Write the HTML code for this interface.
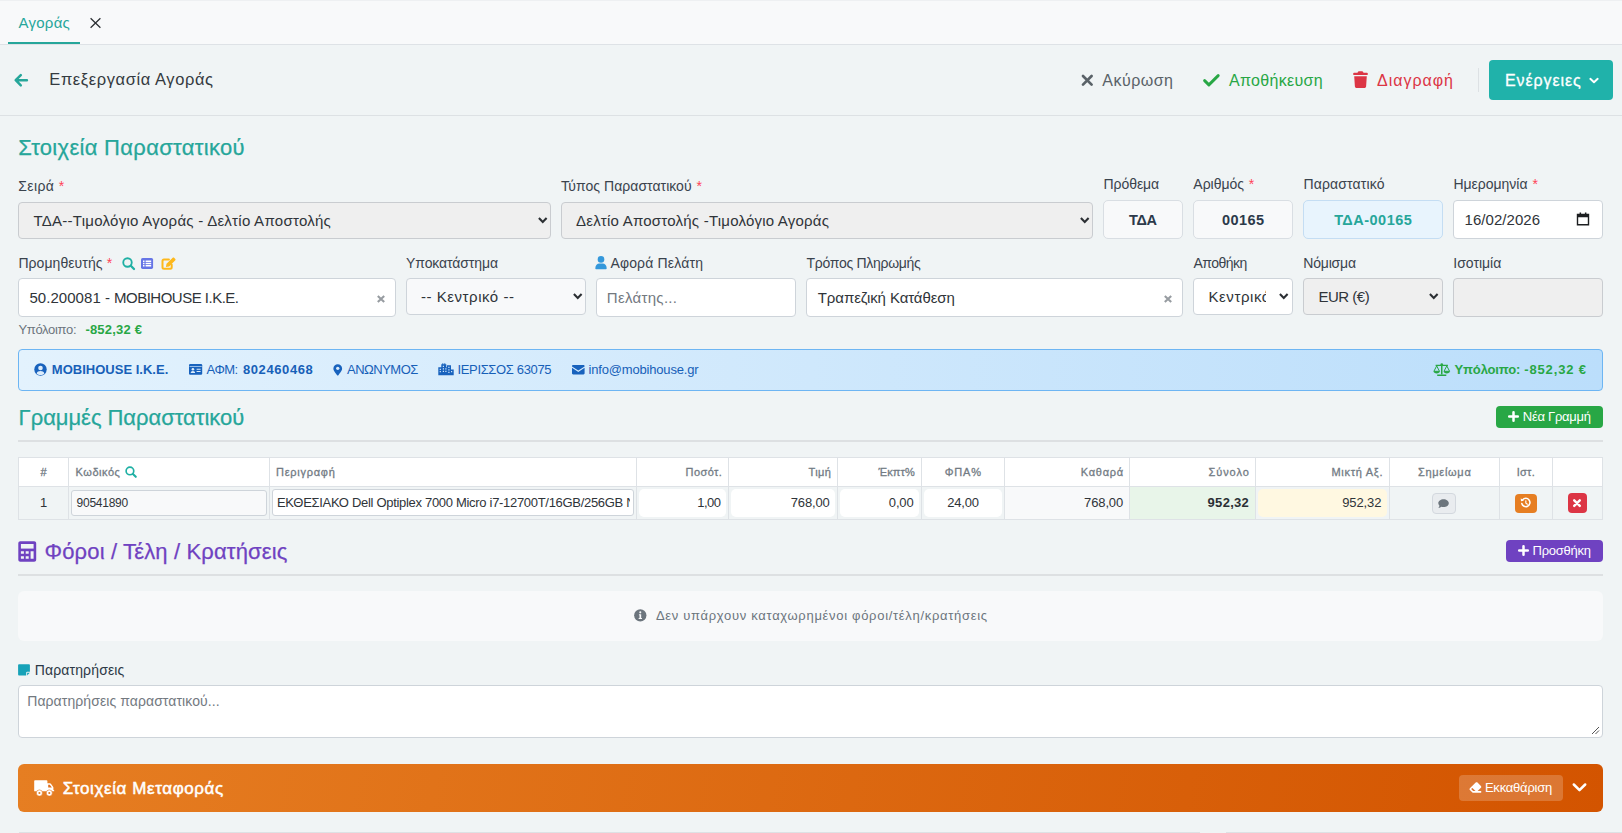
<!DOCTYPE html>
<html lang="el"><head><meta charset="utf-8"><title>Επεξεργασία Αγοράς</title>
<style>
*{margin:0;padding:0;box-sizing:border-box}
html,body{width:1622px;height:833px;overflow:hidden;background:#f0f4f5}
body{font-family:"Liberation Sans",sans-serif;position:relative}
.b{position:absolute}
.t{position:absolute;white-space:nowrap;line-height:1}
.i{position:absolute;overflow:visible}
</style></head>
<body>
<div class="b" style="left:0px;top:0px;width:1622px;height:44px;background:#f8f9fa;"></div>
<div class="b" style="left:0px;top:0px;width:1622px;height:1px;background:#eef0f2;"></div>
<div class="b" style="left:0px;top:44px;width:1622px;height:1px;background:#dee2e6;"></div>
<div class="b" style="left:8px;top:42px;width:72px;height:2px;background:#26a69a;"></div>
<span class="t" style="left:18.50px;top:15px;font-size:15px;color:#26a69a;letter-spacing:0.258px;">Αγοράς</span>
<svg class="i" style="left:90px;top:18px" width="11" height="10" viewBox="0 0 11 10" ><path d="M.6.3 10.4 9.7M10.4.3.6 9.7" stroke="#2b2f33" stroke-width="1.25" fill="none"/></svg>
<div class="b" style="left:0px;top:115px;width:1622px;height:1px;background:#dde1e4;"></div>
<svg class="i" style="left:13px;top:73px" width="17" height="15" viewBox="0 0 17 15" ><path d="M13.900 7.200H3M7.800 2.100 2.700 7.200l5.100 5.100" stroke="#26a69a" stroke-width="2.500" fill="none" stroke-linecap="round" stroke-linejoin="round"/></svg>
<span class="t" style="left:49.30px;top:71px;font-size:16.5px;color:#343a40;letter-spacing:0.586px;">Επεξεργασία Αγοράς</span>
<svg class="i" style="left:1080px;top:73px" width="15" height="15" viewBox="0 0 15 15" ><path d="M3 3l8.6 8.6M11.6 3 3 11.6" stroke="#5a6268" stroke-width="2.7" fill="none" stroke-linecap="round"/></svg>
<span class="t" style="left:1102.30px;top:73px;font-size:16px;color:#5a6268;letter-spacing:0.485px;">Ακύρωση</span>
<svg class="i" style="left:1202px;top:72px" width="19" height="16" viewBox="0 0 19 16" ><path d="M2.6 8.6l4.3 4.3 9.3-9.3" stroke="#28a745" stroke-width="2.9" fill="none" stroke-linecap="round" stroke-linejoin="round"/></svg>
<span class="t" style="left:1229.00px;top:73px;font-size:16px;color:#28a745;letter-spacing:0.308px;">Αποθήκευση</span>
<svg class="i" style="left:1352px;top:71px" width="17" height="18" viewBox="0 0 17 18" ><path d="M1.2 2.6c0-.5.4-.9.9-.9h3.4l.5-1c.2-.3.5-.5.8-.5h3.4c.3 0 .6.2.8.5l.5 1h3.4c.5 0 .9.4.9.9v.6c0 .5-.4.9-.9.9H2.1c-.5 0-.9-.4-.9-.9zM2.2 5.3h12.6l-.7 10.200c-.1.900-.8 1.500-1.700 1.500H4.600c-.900 0-1.600-.600-1.700-1.500z" fill="#dc3545"/></svg>
<span class="t" style="left:1377.00px;top:73px;font-size:16px;color:#dc3545;letter-spacing:0.983px;">Διαγραφή</span>
<div class="b" style="left:1478px;top:68px;width:1px;height:24px;background:#dde1e4;"></div>
<div class="b" style="left:1489px;top:60px;width:124px;height:40px;background:#20b2aa;border-radius:4px;"></div>
<span class="t" style="left:1505.00px;top:73px;font-size:16px;color:#fff;letter-spacing:0.909px;-webkit-text-stroke:.3px #fff;">Ενέργειες</span>
<svg class="i" style="left:1588px;top:76px" width="12" height="9" viewBox="0 0 12 9" ><path d="M2.300 2.800 6 6.300l3.700-3.500" stroke="#fff" stroke-width="1.900" fill="none" stroke-linecap="round" stroke-linejoin="round"/></svg>
<span class="t" style="left:18.30px;top:137px;font-size:22px;color:#26a69a;letter-spacing:0.299px;-webkit-text-stroke:.25px #26a69a;">Στοιχεία Παραστατικού</span>
<span class="t" style="left:18.30px;top:179px;font-size:14px;color:#3a434d;letter-spacing:0.385px;">Σειρά</span>
<span class="t" style="left:58.70px;top:179px;font-size:14px;color:#ff4257;">*</span>
<div class="b" style="left:18px;top:202px;width:533px;height:37px;background:#efefef;border:1px solid #c9ccd0;border-radius:4px;"></div>
<span class="t" style="left:33.50px;top:213px;font-size:15px;color:#2f3439;letter-spacing:0.262px;">ΤΔΑ--Τιμολόγιο Αγοράς - Δελτίο Αποστολής</span>
<svg class="i" style="left:537.5px;top:217.3px" width="10" height="7" viewBox="0 0 10 7" ><path d="M.900 1.100 4.750 4.950 8.600 1.100" stroke="#2b2f33" stroke-width="2.100" fill="none" stroke-linecap="butt" stroke-linejoin="miter"/></svg>
<span class="t" style="left:561.00px;top:179px;font-size:14px;color:#3a434d;letter-spacing:0.028px;">Τύπος Παραστατικού</span>
<span class="t" style="left:696.40px;top:179px;font-size:14px;color:#ff4257;">*</span>
<div class="b" style="left:561px;top:202px;width:532px;height:37px;background:#efefef;border:1px solid #c9ccd0;border-radius:4px;"></div>
<span class="t" style="left:576.00px;top:213px;font-size:15px;color:#2f3439;letter-spacing:0.222px;">Δελτίο Αποστολής -Τιμολόγιο Αγοράς</span>
<svg class="i" style="left:1079.5px;top:217.3px" width="10" height="7" viewBox="0 0 10 7" ><path d="M.900 1.100 4.750 4.950 8.600 1.100" stroke="#2b2f33" stroke-width="2.100" fill="none" stroke-linecap="butt" stroke-linejoin="miter"/></svg>
<span class="t" style="left:1103.40px;top:177px;font-size:14px;color:#3a434d;letter-spacing:-0.040px;">Πρόθεμα</span>
<div class="b" style="left:1103px;top:200px;width:80px;height:39px;background:#f8f9fa;border:1px solid #d9dee3;border-radius:5px;"></div>
<span class="t" style="left:1128.90px;top:213px;font-size:14.5px;color:#2c3a4a;letter-spacing:-0.197px;font-weight:700;">ΤΔΑ</span>
<span class="t" style="left:1193.30px;top:177px;font-size:14px;color:#3a434d;">Αριθμός</span>
<span class="t" style="left:1248.70px;top:177px;font-size:14px;color:#ff4257;">*</span>
<div class="b" style="left:1193px;top:200px;width:100px;height:39px;background:#f8f9fa;border:1px solid #d9dee3;border-radius:5px;"></div>
<span class="t" style="left:1222.00px;top:213px;font-size:14.5px;color:#2c3a4a;letter-spacing:0.419px;font-weight:700;">00165</span>
<span class="t" style="left:1303.50px;top:177px;font-size:14px;color:#3a434d;letter-spacing:0.141px;">Παραστατικό</span>
<div class="b" style="left:1303px;top:200px;width:140px;height:39px;background:#e8f4fd;border:1px solid #c4ddf3;border-radius:5px;"></div>
<span class="t" style="left:1334.15px;top:213px;font-size:14.5px;color:#26a69a;letter-spacing:0.496px;font-weight:700;">ΤΔΑ-00165</span>
<span class="t" style="left:1453.40px;top:177px;font-size:14px;color:#3a434d;letter-spacing:-0.014px;">Ημερομηνία</span>
<span class="t" style="left:1532.40px;top:177px;font-size:14px;color:#ff4257;">*</span>
<div class="b" style="left:1453px;top:200px;width:150px;height:39px;background:#fff;border:1px solid #ced4da;border-radius:4px;"></div>
<span class="t" style="left:1464.50px;top:212px;font-size:15px;color:#2f3439;letter-spacing:0.047px;">16/02/2026</span>
<svg class="i" style="left:1576.2px;top:211.5px" width="14" height="14" viewBox="0 0 14 14" ><path d="M1.5 2.5h11v10.300h-11z" fill="none" stroke="#1d1f21" stroke-width="1.4"/><path d="M1.5 2.200h11v3h-11zM3.600.6h1.500v2H3.600zM8.900.6h1.500v2H8.900z" fill="#1d1f21"/></svg>
<span class="t" style="left:18.40px;top:256px;font-size:14px;color:#3a434d;letter-spacing:0.065px;">Προμηθευτής</span>
<span class="t" style="left:106.70px;top:256px;font-size:14px;color:#ff4257;">*</span>
<svg class="i" style="left:122.3px;top:257.1px" width="13.0" height="13.0" viewBox="0 0 13 13" ><circle cx="5.500" cy="5.500" r="4.250" fill="none" stroke="#1fb0a4" stroke-width="1.850"/><path d="M8.800 8.800l3.200 3.200" stroke="#1fb0a4" stroke-width="2.300" stroke-linecap="round"/></svg>
<svg class="i" style="left:141px;top:257.9px" width="12.2" height="11" viewBox="0 0 12.200 11" ><rect x="0" y="0" width="12.100" height="10.900" rx="1.600" fill="#6675e6"/><path d="M2 2.500h1.500v1.400H2zM4.600 2.500h5.600v1.400H4.600zM2 4.750h1.500v1.400H2zM4.600 4.750h5.600v1.400H4.600zM2 7h1.500v1.400H2zM4.600 7h5.600v1.400H4.600z" fill="#fff"/></svg>
<svg class="i" style="left:160.8px;top:256.8px" width="15.5" height="14" viewBox="0 0 15.500 14" ><path d="M7.900 2.600H3c-.800 0-1.500.700-1.500 1.500v6.100c0 .800.700 1.500 1.500 1.500h6.200c.800 0 1.500-.700 1.500-1.500V7.700" fill="none" stroke="#fdb81c" stroke-width="2" stroke-linecap="round"/><path d="M11.700.700c.400-.400 1-.400 1.400 0l1.200 1.200c.400.400.400 1 0 1.400L8.200 9.400 4.900 10l.6-3.300z" fill="#fdb81c"/></svg>
<div class="b" style="left:18px;top:278px;width:378px;height:38.5px;background:#fff;border:1px solid #ced4da;border-radius:4px;"></div>
<span class="t" style="left:29.40px;top:290px;font-size:15px;color:#2f3439;letter-spacing:0.053px;">50.200081 -</span>
<span class="t" style="left:114.00px;top:290px;font-size:15px;color:#2f3439;letter-spacing:-0.500px;">MOBIHOUSE I.K.E.</span>
<svg class="i" style="left:375.7px;top:293.9px" width="10" height="10" viewBox="0 0 10 10" ><path d="M1.800 2l6.400 6M8.200 2 1.800 8" stroke="#979ca1" stroke-width="2.100" fill="none" stroke-linecap="butt"/></svg>
<span class="t" style="left:18.40px;top:323px;font-size:13px;color:#6c757d;letter-spacing:-0.309px;">Υπόλοιπο:</span>
<span class="t" style="left:85.40px;top:323px;font-size:13px;color:#28a745;letter-spacing:0.195px;font-weight:700;">-852,32 €</span>
<span class="t" style="left:406.10px;top:256px;font-size:14px;color:#3a434d;letter-spacing:-0.105px;">Υποκατάστημα</span>
<div class="b" style="left:406px;top:278px;width:180px;height:37px;background:#f8f9fa;border:1px solid #ced4da;border-radius:4px;"></div>
<span class="t" style="left:421.00px;top:289px;font-size:15px;color:#2f3439;letter-spacing:0.541px;">-- Κεντρικό --</span>
<svg class="i" style="left:572.5px;top:293.1px" width="10" height="7" viewBox="0 0 10 7" ><path d="M.900 1.100 4.750 4.950 8.600 1.100" stroke="#2b2f33" stroke-width="2.100" fill="none" stroke-linecap="butt" stroke-linejoin="miter"/></svg>
<svg class="i" style="left:594.9px;top:256px" width="12" height="13.5" viewBox="0 0 12 13.5" ><circle cx="6" cy="3.400" r="3.300" fill="#3498db"/><path d="M.3 12.200c0-2.800 2-4.600 4-4.600h3.400c2 0 4 1.800 4 4.600 0 .7-.5 1.100-1.100 1.100H1.400c-.6 0-1.100-.4-1.100-1.100z" fill="#3498db"/></svg>
<span class="t" style="left:610.40px;top:256px;font-size:14px;color:#3a434d;letter-spacing:0.172px;">Αφορά Πελάτη</span>
<div class="b" style="left:596px;top:278px;width:200px;height:38.5px;background:#fff;border:1px solid #ced4da;border-radius:4px;"></div>
<span class="t" style="left:606.80px;top:290px;font-size:15px;color:#73797f;letter-spacing:0.303px;">Πελάτης...</span>
<span class="t" style="left:806.60px;top:256px;font-size:14px;color:#3a434d;letter-spacing:-0.299px;">Τρόπος Πληρωμής</span>
<div class="b" style="left:806px;top:278px;width:377px;height:38.5px;background:#fff;border:1px solid #ced4da;border-radius:4px;"></div>
<span class="t" style="left:817.80px;top:290px;font-size:15px;color:#2f3439;letter-spacing:-0.094px;">Τραπεζική Κατάθεση</span>
<svg class="i" style="left:1163px;top:293.9px" width="10" height="10" viewBox="0 0 10 10" ><path d="M1.800 2l6.400 6M8.200 2 1.800 8" stroke="#979ca1" stroke-width="2.100" fill="none" stroke-linecap="butt"/></svg>
<span class="t" style="left:1193.40px;top:256px;font-size:14px;color:#3a434d;letter-spacing:-0.500px;">Αποθήκη</span>
<div class="b" style="left:1193px;top:278px;width:100px;height:37px;background:#fff;border:1px solid #ced4da;border-radius:4px;"></div>
<span class="t" style="left:1208.50px;top:289px;font-size:15px;color:#2f3439;letter-spacing:0.581px;width:57.7px;overflow:hidden;display:block;height:19px;">Κεντρικό</span>
<svg class="i" style="left:1279.1px;top:293.1px" width="10" height="7" viewBox="0 0 10 7" ><path d="M.900 1.100 4.750 4.950 8.600 1.100" stroke="#2b2f33" stroke-width="2.100" fill="none" stroke-linecap="butt" stroke-linejoin="miter"/></svg>
<span class="t" style="left:1303.30px;top:256px;font-size:14px;color:#3a434d;letter-spacing:-0.195px;">Νόμισμα</span>
<div class="b" style="left:1303px;top:278px;width:140px;height:37px;background:#efefef;border:1px solid #c9ccd0;border-radius:4px;"></div>
<span class="t" style="left:1318.50px;top:289px;font-size:15px;color:#2f3439;letter-spacing:-0.500px;">EUR (€)</span>
<svg class="i" style="left:1429.2px;top:293.1px" width="10" height="7" viewBox="0 0 10 7" ><path d="M.900 1.100 4.750 4.950 8.600 1.100" stroke="#2b2f33" stroke-width="2.100" fill="none" stroke-linecap="butt" stroke-linejoin="miter"/></svg>
<span class="t" style="left:1453.30px;top:256px;font-size:14px;color:#3a434d;">Ισοτιμία</span>
<div class="b" style="left:1453px;top:278px;width:150px;height:38.5px;background:#efefef;border:1px solid #c9ccd0;border-radius:4px;"></div>
<div class="b" style="left:18px;top:349px;width:1585px;height:42px;border:1px solid #6db5f3;border-radius:4px;background:linear-gradient(90deg,#e3f2fd 0%,#bbdefb 100%);"></div>
<svg class="i" style="left:34px;top:363px" width="13" height="13" viewBox="0 0 13 13" ><circle cx="6.500" cy="6.500" r="6.200" fill="#1862bd"/><circle cx="6.500" cy="5" r="2.300" fill="#dcecfb"/><path d="M2.600 10.400c.6-1.500 2-2.300 3.900-2.300s3.300.8 3.900 2.300c-1 1-2.400 1.600-3.900 1.600s-2.900-.6-3.900-1.600z" fill="#dcecfb"/></svg>
<span class="t" style="left:51.80px;top:363px;font-size:13px;color:#1760b8;letter-spacing:0.014px;font-weight:700;">MOBIHOUSE I.K.E.</span>
<svg class="i" style="left:189px;top:363.9px" width="13.5" height="10.8" viewBox="0 0 13.500 10.800" ><rect x="0" y="0" width="13.200" height="10.800" rx="1.200" fill="#1862bd"/><path d="M.5 2h12.200v.700H.5z" fill="#cfe6fb"/><circle cx="3.900" cy="5.300" r="1.300" fill="#dcecfb"/><path d="M1.700 8.900c0-1.100.9-1.800 2.200-1.800s2.200.700 2.200 1.800z" fill="#dcecfb"/><path d="M7.600 4.700h4v1h-4zM7.600 6.900h4v1h-4z" fill="#dcecfb"/></svg>
<span class="t" style="left:206.60px;top:363px;font-size:13px;color:#1760b8;letter-spacing:-0.500px;">ΑΦΜ:</span>
<span class="t" style="left:242.90px;top:363px;font-size:13px;color:#1760b8;letter-spacing:0.604px;font-weight:700;">802460468</span>
<svg class="i" style="left:333px;top:363.8px" width="9.5" height="11.6" viewBox="0 0 10 12.500" ><path d="M5 .2C2.400.2.300 2.200.300 4.800c0 2 .8 2.700 4 7.200.3.500 1 .5 1.400 0 3.200-4.500 4-5.200 4-7.200C9.700 2.200 7.600.2 5 .2z" fill="#1862bd"/><circle cx="5" cy="4.700" r="1.800" fill="#dcecfb"/></svg>
<span class="t" style="left:347.00px;top:363px;font-size:13px;color:#1760b8;letter-spacing:-0.500px;">ΑΝΩΝΥΜΟΣ</span>
<svg class="i" style="left:438px;top:363px" width="16" height="12.5" viewBox="0 0 16 12.500" ><path d="M.3 4.200h3V1.200h1V.2h1v1h1v-1h1v1h1V4.200h.700V2.200h4v4.400h2.700v5.600H.300z" fill="#1862bd"/><path d="M1.700 5.700h1.200v1.200H1.700zM1.700 8.100h1.200v1.200H1.700zM4.800 2.700h1.200v1.200H4.800zM4.800 5.200h1.200v1.200H4.800zM4.800 7.700h1.200v1.200H4.800zM7.300 5.200h1.200v1.200H7.300zM7.300 7.700h1.200v1.200H7.300zM10.300 3.700h1.200v1.200h-1.200zM10.300 6.200h1.200v1.200h-1.200zM10.300 8.700h1.200v1.200h-1.200zM13 8.100h1.200v1.200H13z" fill="#cfe6fb"/></svg>
<span class="t" style="left:457.50px;top:363px;font-size:13px;color:#1760b8;letter-spacing:-0.350px;">ΙΕΡΙΣΣΟΣ 63075</span>
<svg class="i" style="left:572px;top:365px" width="13" height="9.5" viewBox="0 0 13 9.500" ><path d="M0 1.100C0 .5.500 0 1.100 0h10.400c.6 0 1.100.5 1.100 1.100v.3L6.300 5.600 0 1.400zM0 2.700l6.300 4.200 6.300-4.200v5.600c0 .6-.5 1.100-1.100 1.100H1.100C.5 9.400 0 8.900 0 8.300z" fill="#1862bd"/></svg>
<span class="t" style="left:588.50px;top:363px;font-size:13px;color:#1760b8;letter-spacing:-0.177px;">info@mobihouse.gr</span>
<svg class="i" style="left:1433px;top:363px" width="17.5" height="13.5" viewBox="0 0 17.500 13.500" ><path d="M8 1.200h1.500v10.300H8z" fill="#28a745"/><path d="M4.200 11.600h9.100v1.400H4.200zM2.600 1.700h12.300v1.300H2.600z" fill="#28a745"/><circle cx="8.750" cy="1.500" r="1.300" fill="#28a745"/><path d="M3.700 2.900.9 8.300h5.600zM13.800 2.900 11 8.300h5.600z" fill="none" stroke="#28a745" stroke-width="1"/><path d="M.6 8.300h6.200c0 1.300-1.400 2.100-3.100 2.100S.6 9.600.6 8.300zM10.700 8.300h6.200c0 1.300-1.400 2.100-3.100 2.100s-3.100-.8-3.100-2.100z" fill="#28a745"/></svg>
<span class="t" style="left:1454.50px;top:363px;font-size:13px;color:#28a745;letter-spacing:-0.144px;font-weight:700;">Υπόλοιπο:</span>
<span class="t" style="left:1524.30px;top:363px;font-size:13px;color:#28a745;letter-spacing:0.845px;font-weight:700;">-852,32 €</span>
<span class="t" style="left:18.60px;top:407px;font-size:22px;color:#26a69a;letter-spacing:-0.038px;-webkit-text-stroke:.25px #26a69a;">Γραμμές Παραστατικού</span>
<div class="b" style="left:1496px;top:406px;width:107px;height:22px;background:#28a745;border-radius:4px;"></div>
<svg class="i" style="left:1507.9px;top:411.1px" width="11" height="11" viewBox="0 0 11 11" ><path d="M5.500 1.200v8.600M1.200 5.500h8.600" stroke="#fff" stroke-width="2.500" stroke-linecap="round"/></svg>
<span class="t" style="left:1522.80px;top:410px;font-size:13px;color:#fff;letter-spacing:-0.266px;">Νέα Γραμμή</span>
<div class="b" style="left:18px;top:440px;width:1585px;height:2px;background:#dde0e2;"></div>
<div class="b" style="left:18px;top:457px;width:1585px;height:30px;background:#fff;"></div>
<div class="b" style="left:1005px;top:487px;width:125px;height:32.5px;background:#f8f9fa;"></div>
<div class="b" style="left:1130px;top:487px;width:126px;height:32.5px;background:#e8f5e9;"></div>
<div class="b" style="left:18px;top:457px;width:1585px;height:1px;background:#dee2e6;"></div>
<div class="b" style="left:18px;top:486px;width:1585px;height:1px;background:#dee2e6;"></div>
<div class="b" style="left:18px;top:519px;width:1585px;height:1px;background:#dee2e6;"></div>
<div class="b" style="left:18px;top:457px;width:1px;height:63px;background:#dee2e6;"></div>
<div class="b" style="left:68px;top:457px;width:1px;height:63px;background:#dee2e6;"></div>
<div class="b" style="left:269px;top:457px;width:1px;height:63px;background:#dee2e6;"></div>
<div class="b" style="left:636px;top:457px;width:1px;height:63px;background:#dee2e6;"></div>
<div class="b" style="left:728px;top:457px;width:1px;height:63px;background:#dee2e6;"></div>
<div class="b" style="left:837px;top:457px;width:1px;height:63px;background:#dee2e6;"></div>
<div class="b" style="left:921px;top:457px;width:1px;height:63px;background:#dee2e6;"></div>
<div class="b" style="left:1004px;top:457px;width:1px;height:63px;background:#dee2e6;"></div>
<div class="b" style="left:1129px;top:457px;width:1px;height:63px;background:#dee2e6;"></div>
<div class="b" style="left:1255px;top:457px;width:1px;height:63px;background:#dee2e6;"></div>
<div class="b" style="left:1389px;top:457px;width:1px;height:63px;background:#dee2e6;"></div>
<div class="b" style="left:1499px;top:457px;width:1px;height:63px;background:#dee2e6;"></div>
<div class="b" style="left:1552px;top:457px;width:1px;height:63px;background:#dee2e6;"></div>
<div class="b" style="left:1602px;top:457px;width:1px;height:63px;background:#dee2e6;"></div>
<span class="t" style="left:40.44px;top:467px;font-size:11px;color:#727b84;-webkit-text-stroke:.3px #727b84;">#</span>
<span class="t" style="left:75.60px;top:467px;font-size:11px;color:#727b84;letter-spacing:0.527px;-webkit-text-stroke:.3px #727b84;">Κωδικός</span>
<svg class="i" style="left:125.4px;top:466.3px" width="11.7" height="11.7" viewBox="0 0 13 13" ><circle cx="5.500" cy="5.500" r="4.250" fill="none" stroke="#1fb0a4" stroke-width="1.850"/><path d="M8.800 8.800l3.200 3.200" stroke="#1fb0a4" stroke-width="2.300" stroke-linecap="round"/></svg>
<span class="t" style="left:276.00px;top:467px;font-size:11px;color:#727b84;letter-spacing:0.735px;-webkit-text-stroke:.3px #727b84;">Περιγραφή</span>
<span class="t" style="left:685.60px;top:467px;font-size:11px;color:#727b84;letter-spacing:0.418px;-webkit-text-stroke:.3px #727b84;">Ποσότ.</span>
<span class="t" style="left:808.60px;top:467px;font-size:11px;color:#727b84;letter-spacing:0.331px;-webkit-text-stroke:.3px #727b84;">Τιμή</span>
<span class="t" style="left:878.57px;top:467px;font-size:11px;color:#727b84;letter-spacing:0.074px;-webkit-text-stroke:.3px #727b84;">Έκπτ%</span>
<span class="t" style="left:944.80px;top:467px;font-size:11px;color:#727b84;letter-spacing:0.788px;-webkit-text-stroke:.3px #727b84;">ΦΠΑ%</span>
<span class="t" style="left:1080.70px;top:467px;font-size:11px;color:#727b84;letter-spacing:0.769px;-webkit-text-stroke:.3px #727b84;">Καθαρά</span>
<span class="t" style="left:1208.50px;top:467px;font-size:11px;color:#727b84;letter-spacing:0.925px;-webkit-text-stroke:.3px #727b84;">Σύνολο</span>
<span class="t" style="left:1331.40px;top:467px;font-size:11px;color:#727b84;letter-spacing:0.720px;-webkit-text-stroke:.3px #727b84;">Μικτή Αξ.</span>
<span class="t" style="left:1418.05px;top:467px;font-size:11px;color:#727b84;letter-spacing:0.687px;-webkit-text-stroke:.3px #727b84;">Σημείωμα</span>
<span class="t" style="left:1516.85px;top:467px;font-size:11px;color:#727b84;letter-spacing:0.217px;-webkit-text-stroke:.3px #727b84;">Ιστ.</span>
<span class="t" style="left:39.89px;top:496px;font-size:13px;color:#2f3439;">1</span>
<div class="b" style="left:71px;top:490px;width:196px;height:26px;background:#f8f9fa;border:1px solid #ced4da;border-radius:3px;"></div>
<span class="t" style="left:76.60px;top:497px;font-size:12px;color:#2f3439;letter-spacing:-0.255px;">90541890</span>
<div class="b" style="left:272px;top:489.4px;width:361.6px;height:26.6px;background:#fff;border:1px solid #ced4da;border-radius:3px;"></div>
<span class="t" style="left:277.00px;top:496px;font-size:13px;color:#2f3439;letter-spacing:-0.306px;width:352.5px;overflow:hidden;display:block;height:16px;">ΕΚΘΕΣΙΑΚΟ Dell Optiplex 7000 Micro i7-12700T/16GB/256GB NVMe</span>
<div class="b" style="left:638.7px;top:489.4px;width:87px;height:27.2px;background:#fff;border-radius:5px;"></div>
<span class="t" style="left:697.20px;top:496px;font-size:13px;color:#2f3439;letter-spacing:-0.500px;">1,00</span>
<div class="b" style="left:731px;top:489.4px;width:104px;height:27.2px;background:#fff;border-radius:5px;"></div>
<span class="t" style="left:790.70px;top:496px;font-size:13px;color:#2f3439;letter-spacing:-0.133px;">768,00</span>
<div class="b" style="left:840px;top:489.4px;width:79px;height:27.2px;background:#fff;border-radius:5px;"></div>
<span class="t" style="left:888.80px;top:496px;font-size:13px;color:#2f3439;letter-spacing:-0.133px;">0,00</span>
<div class="b" style="left:924px;top:489.4px;width:78.2px;height:27.2px;background:#fff;border-radius:5px;"></div>
<span class="t" style="left:947.30px;top:496px;font-size:13px;color:#2f3439;letter-spacing:-0.232px;">24,00</span>
<span class="t" style="left:1084.10px;top:496px;font-size:13px;color:#2f3439;letter-spacing:-0.133px;">768,00</span>
<span class="t" style="left:1207.60px;top:496px;font-size:13px;color:#2a2f34;letter-spacing:0.287px;font-weight:700;">952,32</span>
<div class="b" style="left:1258.3px;top:489.4px;width:128.5px;height:27.2px;background:#fff8e1;border-radius:5px;"></div>
<span class="t" style="left:1342.20px;top:496px;font-size:13px;color:#2f3439;letter-spacing:-0.093px;">952,32</span>
<div class="b" style="left:1432.2px;top:493px;width:23.5px;height:21px;background:#e9ecef;border:1px solid #d3d8de;border-radius:4px;"></div>
<svg class="i" style="left:1438.2px;top:498.6px" width="11.2" height="9.3" viewBox="0 0 11.500 9.500" ><path d="M5.700.3C2.700.3.300 2.100.300 4.300c0 1 .5 1.800 1.200 2.500-.2.900-.8 1.700-1 1.900-.1.100-.1.300.1.300 1.300 0 2.300-.6 2.800-1 .7.200 1.500.3 2.300.3 3 0 5.400-1.800 5.400-4S8.700.3 5.700.3z" fill="#6c757d"/></svg>
<div class="b" style="left:1515px;top:494px;width:22px;height:19px;background:#e67e22;border-radius:4px;"></div>
<svg class="i" style="left:1520px;top:497.3px" width="11.7" height="11.7" viewBox="0 0 13 13" ><path d="M2.900 3.200A4.600 4.600 0 1 1 2 7.200" fill="none" stroke="#fff" stroke-width="1.700" stroke-linecap="round"/><path d="M.8 1.300l.3 3.300 3.300-.3z" fill="#fff"/><path d="M6.500 4.200v2.600l1.700 1.200" fill="none" stroke="#fff" stroke-width="1.300" stroke-linecap="round" stroke-linejoin="round"/></svg>
<div class="b" style="left:1568.2px;top:493px;width:18.8px;height:20px;background:#dc3545;border-radius:4px;"></div>
<svg class="i" style="left:1572.2px;top:498.1px" width="10" height="10" viewBox="0 0 10 10" ><path d="M2.200 2.300l5.600 5.600M7.800 2.300 2.200 7.900" stroke="#fff" stroke-width="2.400" stroke-linecap="round"/></svg>
<svg class="i" style="left:17.5px;top:541px" width="18.5" height="21" viewBox="0 0 18.500 21" ><path d="M2.300.3h13.900c1.100 0 2 .9 2 2v16.400c0 1.100-.9 2-2 2H2.300c-1.100 0-2-.9-2-2V2.300c0-1.100.9-2 2-2z" fill="#6f42c1"/><path d="M2.900 3h12.700v4.600H2.900z" fill="#f0f4f5"/><path d="M2.900 10.200h3v2.500h-3zM7.700 10.200h3v2.500h-3zM12.600 10.200h3v7.600h-3zM2.900 15.300h3v2.500h-3zM7.700 15.300h3v2.500h-3z" fill="#f0f4f5"/></svg>
<span class="t" style="left:44.50px;top:541px;font-size:22px;color:#6f42c1;letter-spacing:0.149px;-webkit-text-stroke:.25px #6f42c1;">Φόροι / Τέλη / Κρατήσεις</span>
<div class="b" style="left:1506px;top:540px;width:97px;height:22px;background:#6f42c1;border-radius:4px;"></div>
<svg class="i" style="left:1518.2px;top:545.2px" width="11" height="11" viewBox="0 0 11 11" ><path d="M5.500 1.200v8.600M1.200 5.500h8.600" stroke="#fff" stroke-width="2.500" stroke-linecap="round"/></svg>
<span class="t" style="left:1532.50px;top:544px;font-size:13px;color:#fff;letter-spacing:-0.247px;">Προσθήκη</span>
<div class="b" style="left:18px;top:574px;width:1585px;height:2px;background:#dde0e2;"></div>
<div class="b" style="left:18px;top:591px;width:1585px;height:50px;background:#f8f9fa;border-radius:6px;"></div>
<svg class="i" style="left:633.8px;top:608.8px" width="12.6" height="12.6" viewBox="0 0 13.500 13.500" ><circle cx="6.750" cy="6.750" r="6.600" fill="#6c757d"/><circle cx="6.750" cy="3.600" r="1.100" fill="#f8f9fa"/><path d="M5.300 5.600h2.400v4h.900v1.200H5v-1.200h.9V6.800h-.6z" fill="#f8f9fa"/></svg>
<span class="t" style="left:655.90px;top:609px;font-size:13px;color:#6c757d;letter-spacing:0.695px;">Δεν υπάρχουν καταχωρημένοι φόροι/τέλη/κρατήσεις</span>
<svg class="i" style="left:18px;top:664.2px" width="12" height="11.5" viewBox="0 0 12 11.500" ><path d="M1 .2h10c.5 0 .9.400.9.900v6.700H9.100c-.5 0-.9.400-.9.900v2.700H1c-.5 0-.9-.4-.9-.9V1.100c0-.5.400-.9.900-.9z" fill="#17a2b8"/><path d="M9.100 8.700h2.700l-2.700 2.700z" fill="#17a2b8"/></svg>
<span class="t" style="left:34.70px;top:663px;font-size:14px;color:#2c3845;letter-spacing:0.139px;">Παρατηρήσεις</span>
<div class="b" style="left:18px;top:685px;width:1585px;height:52.5px;background:#fff;border:1px solid #ced4da;border-radius:4px;"></div>
<span class="t" style="left:27.20px;top:694px;font-size:14px;color:#73797f;letter-spacing:0.081px;">Παρατηρήσεις παραστατικού...</span>
<svg class="i" style="left:1591px;top:726px" width="9" height="9" viewBox="0 0 9 9" ><path d="M8 1 1 8M8 4.500 4.500 8" stroke="#555" stroke-width="1" fill="none"/></svg>
<div class="b" style="left:18px;top:764px;width:1585px;height:48px;border-radius:6px;background:linear-gradient(100deg,#e67e22 0%,#d35400 100%);"></div>
<svg class="i" style="left:33.5px;top:780px" width="21" height="16" viewBox="0 0 21 16" ><path d="M1 .2h11.500c.500 0 .900.400.900.900v2.200h2.500c.400 0 .800.200 1 .500l2.200 2.900c.200.300.300.600.300.900V10h.300c.300 0 .500.200.500.500v.800H.200V1.100C.200.600.500.200 1 .200z" fill="#fff"/><path d="M14.200 4.700h1.400c.200 0 .300.100.400.200l1.900 2.500h-3.700z" fill="#e0701f"/><circle cx="5.400" cy="13" r="3.100" fill="#fff" stroke="#e37b21" stroke-width=".6"/><circle cx="15.300" cy="13" r="3.100" fill="#fff" stroke="#e0731f" stroke-width=".6"/><circle cx="5.400" cy="13" r="1.050" fill="#e37b21"/><circle cx="15.300" cy="13" r="1.050" fill="#e0731f"/></svg>
<span class="t" style="left:62.70px;top:780px;font-size:17px;color:#fff;letter-spacing:0.591px;-webkit-text-stroke:.5px #fff;">Στοιχεία Μεταφοράς</span>
<div class="b" style="left:1459px;top:775px;width:104px;height:26px;background:rgba(255,255,255,.2);border-radius:4px;"></div>
<svg class="i" style="left:1468.5px;top:782px" width="13" height="11" viewBox="0 0 13 11" ><path d="M6.700.6c.5-.5 1.300-.5 1.800 0l3.400 3.400c.5.500.5 1.300 0 1.800L8.600 9.100h3.600v1.700H3.700L.9 8c-.5-.5-.5-1.300 0-1.800z" fill="#fff"/><path d="M3.400 5.900 6.600 9.100H4.200L2.100 7.100z" fill="#dd7330"/></svg>
<span class="t" style="left:1484.90px;top:781px;font-size:13px;color:#fff;letter-spacing:-0.213px;">Εκκαθάριση</span>
<svg class="i" style="left:1570.9px;top:781px" width="17" height="13" viewBox="0 0 17 13" ><path d="M2.800 3.500l5.700 5.700 5.700-5.700" stroke="#fff" stroke-width="2.500" fill="none" stroke-linecap="round" stroke-linejoin="round"/></svg>
<div class="b" style="left:19px;top:832px;width:1181px;height:1px;background:#dde1e4;"></div>
<div class="b" style="left:1226px;top:832px;width:1376px;height:1px;background:#dde1e4;"></div>
</body></html>
